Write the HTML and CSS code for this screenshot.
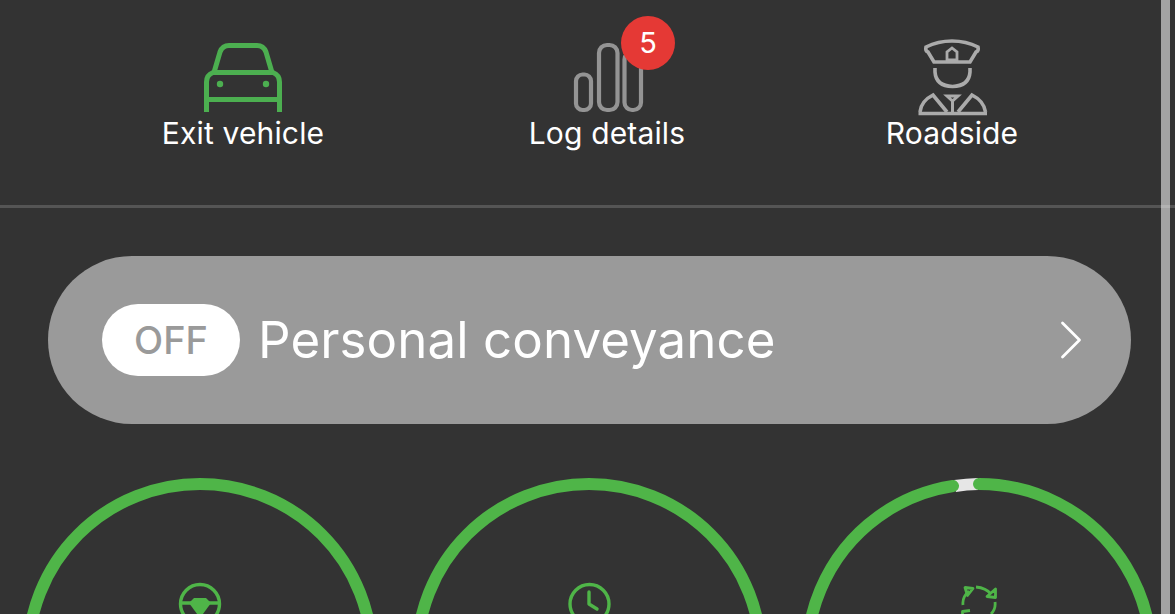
FILE: index.html
```html
<!DOCTYPE html>
<html lang="en">
<head>
<meta charset="utf-8">
<title>Driver dashboard</title>
<link rel="stylesheet" href="styles.css">
</head>
<body>
<div class="page">
  <nav class="nav">
    <a class="nav-item nav-first">
      <svg class="nav-icon" viewBox="204 38 78 80" fill="none" stroke="#4caf50" stroke-width="5">
        <path d="M206.500 112V82Q206.500 75 213 72.500H273Q279.500 75 279.500 82V112"/>
        <path d="M214 72.500L220 52Q222.500 45.500 229 45.500H257Q263.500 45.500 266 52L272 72.500"/>
        <path d="M206.500 99.500H279.500"/>
        <circle cx="220" cy="84" r="3.200" fill="#4caf50" stroke="none"/>
        <circle cx="266" cy="84" r="3.200" fill="#4caf50" stroke="none"/>
      </svg>
      <span class="nav-label">Exit vehicle</span>
    </a>
    <a class="nav-item">
      <svg class="nav-icon" viewBox="568 38 78 80" fill="none" stroke="#949494" stroke-width="4.200">
        <rect x="576" y="74.500" width="15" height="35.500" rx="6.500"/>
        <rect x="599" y="45" width="18.500" height="65" rx="8"/>
        <rect x="624.500" y="52" width="16.500" height="58" rx="7.500"/>
      </svg>
      <span class="nav-label">Log details</span>
      <span class="badge">5</span>
    </a>
    <a class="nav-item">
      <svg class="nav-icon" viewBox="913 38 78 80" fill="none" stroke="#ababab" stroke-width="3.600">
        <path d="M952 41Q938 41 926 47Q925 51 928 52L934 62H970L976 52Q979 51 978 47Q966 41 952 41Z"/>
        <path d="M947 60V52L952 48L957 52V60Z" stroke-width="2.800"/>
        <path d="M935 68V72Q936 86 952.500 86.500Q969 86 970 72V68"/>
        <path d="M918.500 113.500H987"/>
        <path d="M920 112Q921 101 933 95L947 112"/>
        <path d="M985.500 112Q984 101 972 95L958 112"/>
        <path d="M947 96H958L952.500 101ZM952.500 101V112" stroke-width="3"/>
      </svg>
      <span class="nav-label">Roadside</span>
    </a>
  </nav>
  <div class="divider"></div>
  <section class="conveyance">
    <div class="pill">
      <span class="toggle">OFF</span>
      <span class="pill-title">Personal conveyance</span>
      <svg class="chevron" viewBox="0 0 22 38" fill="none" stroke="#fff" stroke-width="2.800" stroke-linecap="round" stroke-linejoin="round">
        <path d="M2.500 2L19.500 19L2.500 36"/>
      </svg>
    </div>
  </section>
  <section class="rings">
    <svg class="ring" viewBox="22 478 356 356" fill="none">
      <circle cx="200" cy="656" r="172" stroke="#4fb548" stroke-width="12"/>
      <g class="ring-icon">
        <circle cx="200" cy="604" r="19.500" stroke="#4fb548" stroke-width="3.400"/>
        <path d="M181 603H192M208 603H219" stroke="#4fb548" stroke-width="3.400"/>
        <path d="M194 598H206L211 603L200 618L189 603Z" fill="#4fb548"/>
      </g>
    </svg>
    <svg class="ring" viewBox="411 478 356 356" fill="none">
      <circle cx="589" cy="656" r="172" stroke="#4fb548" stroke-width="12"/>
      <g class="ring-icon">
        <circle cx="589.500" cy="604" r="19.500" stroke="#4fb548" stroke-width="3.400"/>
        <path d="M589 592V604L597 609" stroke="#4fb548" stroke-width="3.400" stroke-linecap="round" stroke-linejoin="round"/>
      </g>
    </svg>
    <svg class="ring" viewBox="800 478 356 356" fill="none">
      <path d="M955 486A172 172 0 0 1 978 484" stroke="#e6e6e6" stroke-width="12"/>
      <path d="M979 484A172 172 0 1 1 953 486" stroke="#4fb548" stroke-width="12" stroke-linecap="round"/>
      <g class="ring-icon" stroke="#4fb548" stroke-width="2.800" stroke-linejoin="round">
        <path d="M976 587Q986 588 991 594"/>
        <path d="M995.500 589V597.500L987 596.500Z"/>
        <path d="M963 605Q962 597 969 591"/>
        <path d="M965 587.500L973 588.500L967.500 595.500Z"/>
        <path d="M995 602Q996 609 991 614"/>
        <path d="M962.500 616V611.500L970 610.500"/>
      </g>
    </svg>
  </section>
  <div class="scrollbar"></div>
</div>
</body>
</html>
```
FILE: styles.css
```css
* { box-sizing: border-box; }
html, body { margin: 0; height: 100%; }
body { background: #333; overflow: hidden; font-family: Inter, "Noto Sans", sans-serif; color: #fff; }
.page { position: relative; width: 1175px; height: 614px; overflow: hidden; }
.nav { display: grid; grid-template-columns: 364px 364px 326px; padding: 38px 0 0 61px; height: 205px; }
.nav-item { position: relative; display: flex; flex-direction: column; align-items: center; height: 122px; }
.nav-icon { display: block; width: 78px; height: 80px; flex: none; filter: blur(0.5px); }
.nav-label { font-size: 30px; line-height: 30px; letter-spacing: 0.15px; white-space: nowrap; }
.badge { position: absolute; left: 196px; top: -22px; width: 54px; height: 54px; border-radius: 50%; background: #e53935; font-size: 29px; line-height: 54px; text-align: center; }
.divider { height: 3px; background: #555; }
.conveyance { padding: 48px 44px 54px 48px; }
.pill { display: flex; align-items: center; height: 168px; border-radius: 84px; background: #9a9a9a; padding: 0 49px 0 54px; }
.toggle { width: 138px; height: 72px; flex: none; border-radius: 36px; background: #fff; color: #9a9a9a; font-size: 38px; font-weight: 500; line-height: 72px; text-align: center; }
.pill-title { flex: 1; margin-left: 18px; font-size: 51px; line-height: 60px; letter-spacing: 0.1px; white-space: nowrap; }
.chevron { display: block; width: 22px; height: 38px; flex: none; }
.rings { display: flex; gap: 33px; padding-left: 22px; }
.ring { display: block; width: 356px; height: 356px; flex: none; }
.ring-icon { filter: blur(0.4px); }
.scrollbar { position: absolute; top: 0; bottom: 0; left: 1161px; width: 9px; background: rgba(255, 255, 255, 0.55); }
```
